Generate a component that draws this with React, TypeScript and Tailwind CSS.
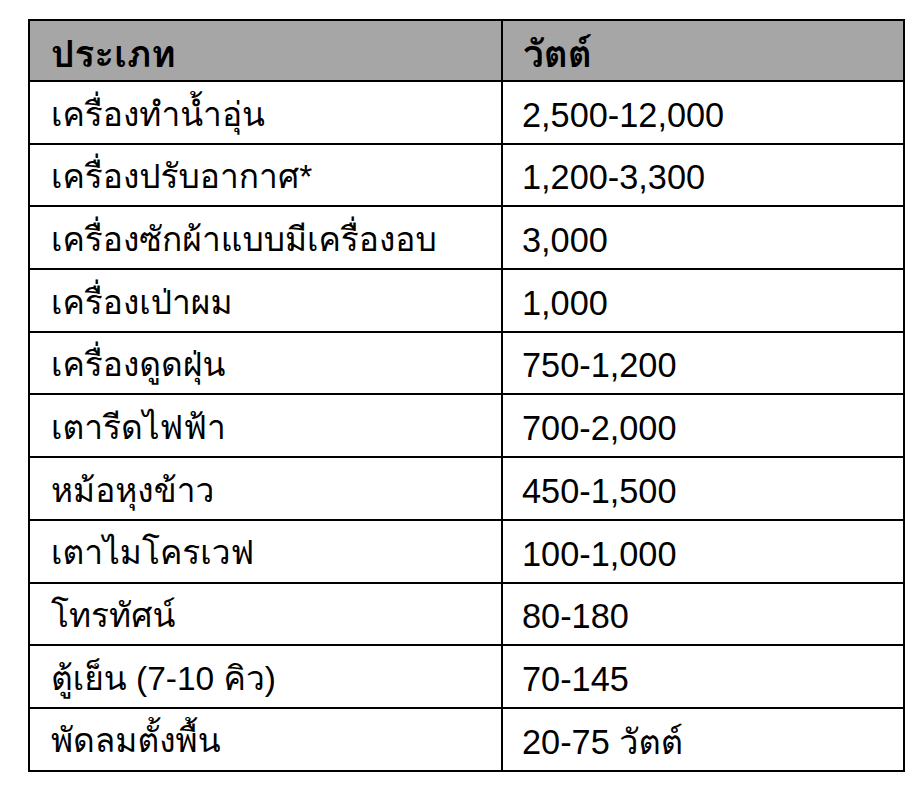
const rows: [string, string][] = [
  ['เครื่องทำน้ำอุ่น', '2,500-12,000'],
  ['เครื่องปรับอากาศ*', '1,200-3,300'],
  ['เครื่องซักผ้าแบบมีเครื่องอบ', '3,000'],
  ['เครื่องเป่าผม', '1,000'],
  ['เครื่องดูดฝุ่น', '750-1,200'],
  ['เตารีดไฟฟ้า', '700-2,000'],
  ['หม้อหุงข้าว', '450-1,500'],
  ['เตาไมโครเวฟ', '100-1,000'],
  ['โทรทัศน์', '80-180'],
  ['ตู้เย็น (7-10 คิว)', '70-145'],
  ['พัดลมตั้งพื้น', '20-75 วัตต์'],
];

export default function App() {
  return (
    <div className="min-h-[798px] w-[924px] bg-white pl-[28px] pt-[19px] font-['Liberation_Sans',Loma,sans-serif] text-black">
      <table className="w-[875px] table-fixed border-collapse border-2 border-black">
        <colgroup>
          <col className="w-[473px]" />
          <col className="w-[402px]" />
        </colgroup>
        <thead>
          <tr className="h-[61px] bg-[#a6a6a6]">
            <th className="border-2 border-black pl-[21px] pt-[7px] text-left text-[37px] font-bold leading-none">ประเภท</th>
            <th className="border-2 border-black pl-[20px] pt-[7px] text-left text-[37px] font-bold leading-none">วัตต์</th>
          </tr>
        </thead>
        <tbody>
          {rows.map(([name, watt]) => (
            <tr key={name} className="h-[62.7px]">
              <td className="border-2 border-black pl-[21px] pt-[4px] text-[33.5px] leading-none">{name}</td>
              <td className="border-2 border-black pl-[19px] pt-[5px] text-[34.3px] leading-none">{watt}</td>
            </tr>
          ))}
        </tbody>
      </table>
    </div>
  );
}
